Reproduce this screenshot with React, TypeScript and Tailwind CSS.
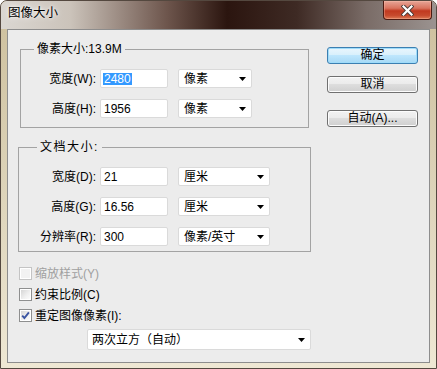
import React from "react";

const Arrow = () => (
  <svg width="7" height="4" viewBox="0 0 7 4" className="shrink-0">
    <path d="M0 0h7L3.5 4z" fill="#000" />
  </svg>
);

interface SelectProps {
  value: string;
  w: string;
}

const Select: React.FC<SelectProps> = ({ value, w }) => (
  <div className={`${w} h-[19px] bg-white border border-[#dadada] rounded-[2px] flex items-center pl-[5px] pr-[5px]`}>
    <span className="flex-1 whitespace-nowrap">{value}</span>
    <Arrow />
  </div>
);

interface RowProps {
  label: string;
  value: string;
  unit: string;
  labelW: string;
  selW: string;
  selected?: boolean;
}

const Row: React.FC<RowProps> = ({ label, value, unit, labelW, selW, selected }) => (
  <div className="flex items-center h-[19px]">
    <span className={`${labelW} shrink-0 text-right pr-[4px] whitespace-nowrap`}>{label}</span>
    <div className="w-[68px] h-[19px] shrink-0 bg-white border border-[#dadada] rounded-[2px] flex items-center pl-[2px]">
      {selected ? (
        <span className="bg-[#3399ff] text-white px-[1px] leading-[12px]">{value}</span>
      ) : (
        <span className="px-[1px]">{value}</span>
      )}
    </div>
    <div className="ml-[10px]">
      <Select value={unit} w={selW} />
    </div>
  </div>
);

interface CheckProps {
  label: string;
  checked?: boolean;
  disabled?: boolean;
}

const Check: React.FC<CheckProps> = ({ label, checked, disabled }) => (
  <div className="flex items-center gap-[3px] h-[13px] ml-[1px]">
    <div
      className={`w-[13px] h-[13px] shrink-0 border ${
        disabled ? "border-[#c4c4c4]" : "border-[#8e8f8f]"
      } bg-white p-[1px]`}
    >
      <div
        className={`w-full h-full ${
          disabled
            ? "bg-[#f2f2f2]"
            : "bg-[linear-gradient(135deg,#d6d6d6_0%,#f0f0f0_60%,#fbfbfb_100%)]"
        } flex items-center justify-center`}
      >
        {checked && (
          <svg width="9" height="9" viewBox="0 0 9 9">
            <path d="M1.2 4.6L3.4 7L7.9 1.4" fill="none" stroke="#3b55a2" strokeWidth="1.9" />
          </svg>
        )}
      </div>
    </div>
    <span className={`whitespace-nowrap leading-[16px] ${disabled ? "text-[#a0a0a0]" : "text-black"}`}>{label}</span>
  </div>
);

interface BtnProps {
  label: string;
  primary?: boolean;
  className?: string;
}

const Btn: React.FC<BtnProps> = ({ label, primary, className }) => (
  <div
    className={`w-[91px] h-[17px] rounded-[3px] border flex items-center justify-center leading-[15px] ${
      primary
        ? "border-[#3c7fb1] bg-[linear-gradient(180deg,#eaf6fd_0%,#d9f0fc_45%,#bee6fd_50%,#a7d9f5_100%)] shadow-[inset_0_0_0_1px_#9fdcfa]"
        : "border-[#707070] bg-[linear-gradient(180deg,#f2f2f2_0%,#ebebeb_45%,#dddddd_50%,#cfcfcf_100%)] shadow-[inset_0_0_0_1px_#fcfcfc]"
    } ${className ?? ""}`}
  >
    {label}
  </div>
);

export default function App() {
  return (
    <div className="w-[437px] h-[369px] flex flex-col rounded-t-[7px] overflow-hidden border border-[#54483f] bg-[linear-gradient(180deg,#cdbf9c_0%,#d9cfb3_40%,#e7dfc9_80%,#efe8d4_100%)] font-['Liberation_Sans','Noto_Sans_CJK_SC',sans-serif] text-[12px] text-black">
      {/* title bar */}
      <div className="h-[28px] shrink-0 flex items-start bg-[linear-gradient(90deg,#dbd7d2_0%,#cbc3ba_16%,#6e564d_38%,#2b150f_52%,#3e2a24_68%,#7a6c67_84%,#9b9390_100%)]">
        <span className="ml-[7px] mt-[4px] leading-[16px] text-[12.5px] [text-shadow:0_0_6px_rgba(255,255,255,0.95),0_0_3px_rgba(255,255,255,0.9)]">
          图像大小
        </span>
        <div className="ml-auto mr-[4px] w-[49px] h-[19px] rounded-b-[4px] border border-t-0 border-[#4c1b12] bg-[linear-gradient(180deg,#e7a597_0%,#d9735e_40%,#c1391f_55%,#c74a2d_80%,#dc7a55_100%)] shadow-[inset_0_0_0_1px_rgba(255,200,180,0.35)] flex items-center justify-center">
          <svg width="13" height="11" viewBox="0 0 13 11">
            <path d="M2.5 1.5L10.5 9.5M10.5 1.5L2.5 9.5" stroke="#4a3a36" strokeWidth="4" strokeLinecap="square" />
            <path d="M2.5 1.5L10.5 9.5M10.5 1.5L2.5 9.5" stroke="#ffffff" strokeWidth="2.2" strokeLinecap="square" />
          </svg>
        </div>
      </div>

      {/* frame body */}
      <div className="flex-1 flex pl-[6px] pr-[6px] pb-[5px]">
        <div className="flex-1 flex border border-[#8d8d8d] bg-[#ececec] pt-[11px] pl-[10px]">
          {/* left column */}
          <div className="w-[293px] shrink-0 flex flex-col">
            <fieldset className="w-[289px] ml-[2px] border border-[#a3a3a3] pt-[12px] pb-[9px]">
              <legend className="ml-[13px] px-[3px] leading-[16px]">像素大小:13.9M</legend>
              <div className="flex flex-col gap-[11px]">
                <Row label="宽度(W):" value="2480" unit="像素" labelW="w-[79px]" selW="w-[74px]" selected />
                <Row label="高度(H):" value="1956" unit="像素" labelW="w-[79px]" selW="w-[74px]" />
              </div>
            </fieldset>

            <fieldset className="w-[293px] mt-[11px] border border-[#a3a3a3] pt-[12px] pb-[5px]">
              <legend className="ml-[18px] px-[3px] leading-[16px] tracking-[1.5px]">文档大小:</legend>
              <div className="flex flex-col gap-[11px]">
                <Row label="宽度(D):" value="21" unit="厘米" labelW="w-[81px]" selW="w-[92px]" />
                <Row label="高度(G):" value="16.56" unit="厘米" labelW="w-[81px]" selW="w-[92px]" />
                <Row label="分辨率(R):" value="300" unit="像素/英寸" labelW="w-[81px]" selW="w-[92px]" />
              </div>
            </fieldset>

            <div className="mt-[15px] flex flex-col gap-[8px]">
              <Check label="缩放样式(Y)" disabled />
              <Check label="约束比例(C)" />
              <Check label="重定图像像素(I):" checked />
            </div>

            <div className="mt-[7px] ml-[69px]">
              <div className="w-[224px] h-[21px] bg-white border border-[#dadada] rounded-[2px] flex items-center pl-[4px] pr-[5px]">
                <span className="flex-1 whitespace-nowrap">两次立方（自动）</span>
                <Arrow />
              </div>
            </div>
          </div>

          {/* right column */}
          <div className="ml-[16px] mt-[6px] flex flex-col">
            <Btn label="确定" primary />
            <Btn label="取消" className="mt-[12px]" />
            <Btn label="自动(A)..." className="mt-[17px]" />
          </div>
        </div>
      </div>
    </div>
  );
}
